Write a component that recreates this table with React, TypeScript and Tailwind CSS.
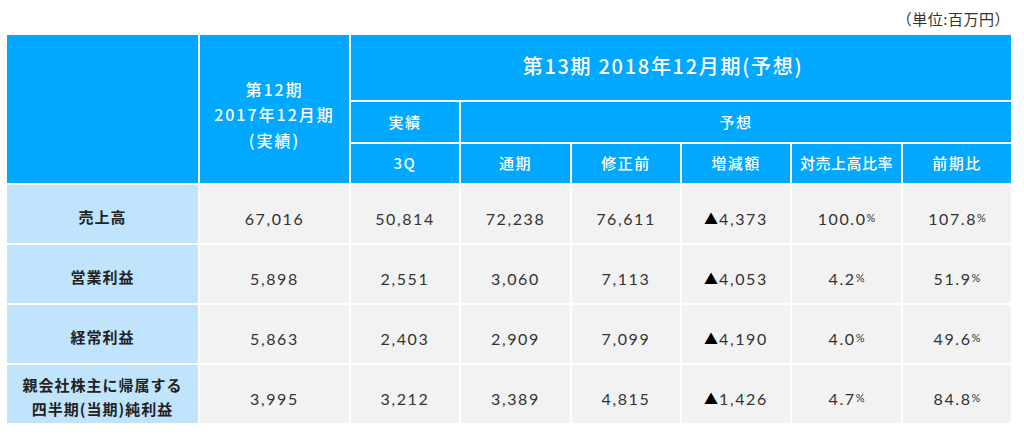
import React from "react";

const jp = { fontFamily: '"Noto Sans CJK JP", "Noto Sans", sans-serif' };
const num = { fontFamily: 'Lato, "Noto Sans CJK JP", sans-serif' };

type Row = {
  label: React.ReactNode;
  vals: string[];
  dec: string;
  pct: string[];
};

const rows: Row[] = [
  { label: "売上高", vals: ["67,016", "50,814", "72,238", "76,611"], dec: "4,373", pct: ["100.0", "107.8"] },
  { label: "営業利益", vals: ["5,898", "2,551", "3,060", "7,113"], dec: "4,053", pct: ["4.2", "51.9"] },
  { label: "経常利益", vals: ["5,863", "2,403", "2,909", "7,099"], dec: "4,190", pct: ["4.0", "49.6"] },
  {
    label: (
      <>
        親会社株主に帰属する
        <br />
        四半期(当期)純利益
      </>
    ),
    vals: ["3,995", "3,212", "3,389", "4,815"],
    dec: "1,426",
    pct: ["4.7", "84.8"],
  },
];

const H = "bg-[#00a8ff] text-white flex items-center justify-center font-medium";
const B = "bg-[#f2f2f2] text-[#333333] flex items-center justify-center pt-[9px] text-[16px] tracking-[1.6px]";

export default function App() {
  return (
    <div className="w-[1024px] h-[434px] bg-white" style={jp}>
      <div className="h-[35px] flex justify-end items-center pr-[14px] pt-[3px] text-[15px] text-[#333333] tracking-[0.5px]">
        （単位:百万円）
      </div>
      <div className="ml-[7px] w-[1004px] grid grid-cols-[191px_149px_108px_109px_108px_108px_109px_108px] grid-rows-[65px_40px_39px_58px_58px_58px_58px] gap-[2px] bg-white">
        <div className={`${H} row-span-3`}></div>
        <div className={`${H} row-span-3 flex-col text-[16px] leading-[25.5px] tracking-[2px] pt-[12px]`}>
          <span>第12期</span>
          <span>2017年12月期</span>
          <span>(実績)</span>
        </div>
        <div className={`${H} col-span-6 text-[20px] tracking-[1.7px] pb-[4px] pr-[36px]`}>第13期 2018年12月期(予想)</div>
        <div className={`${H} text-[15px] tracking-[1.5px]`}>実績</div>
        <div className={`${H} col-span-5 text-[15px] tracking-[1.5px]`}>予想</div>
        <div className={`${H} text-[15px] tracking-[1.5px]`}>3Q</div>
        <div className={`${H} text-[15px] tracking-[1.5px]`}>通期</div>
        <div className={`${H} text-[15px] tracking-[1.5px]`}>修正前</div>
        <div className={`${H} text-[15px] tracking-[1.5px]`}>増減額</div>
        <div className={`${H} text-[15px] tracking-[0.5px]`}>対売上高比率</div>
        <div className={`${H} text-[15px] tracking-[1.5px]`}>前期比</div>
        {rows.map((r, i) => (
          <React.Fragment key={i}>
            <div className="bg-[#bfe4fc] text-[#222222] flex items-center justify-center text-center font-bold text-[15px] leading-[24px] tracking-[1px] pt-[5px]">
              {r.label}
            </div>
            {r.vals.map((v, j) => (
              <div key={j} className={B} style={num}>
                {v}
              </div>
            ))}
            <div className={B} style={num}>
              <span className="text-[14px] text-black tracking-[0px] mr-[1px]" style={jp}>▲</span>
              {r.dec}
            </div>
            {r.pct.map((p, j) => (
              <div key={j} className={B} style={num}>
                {p}
                <span className="text-[11px] tracking-[0px]">%</span>
              </div>
            ))}
          </React.Fragment>
        ))}
      </div>
    </div>
  );
}
